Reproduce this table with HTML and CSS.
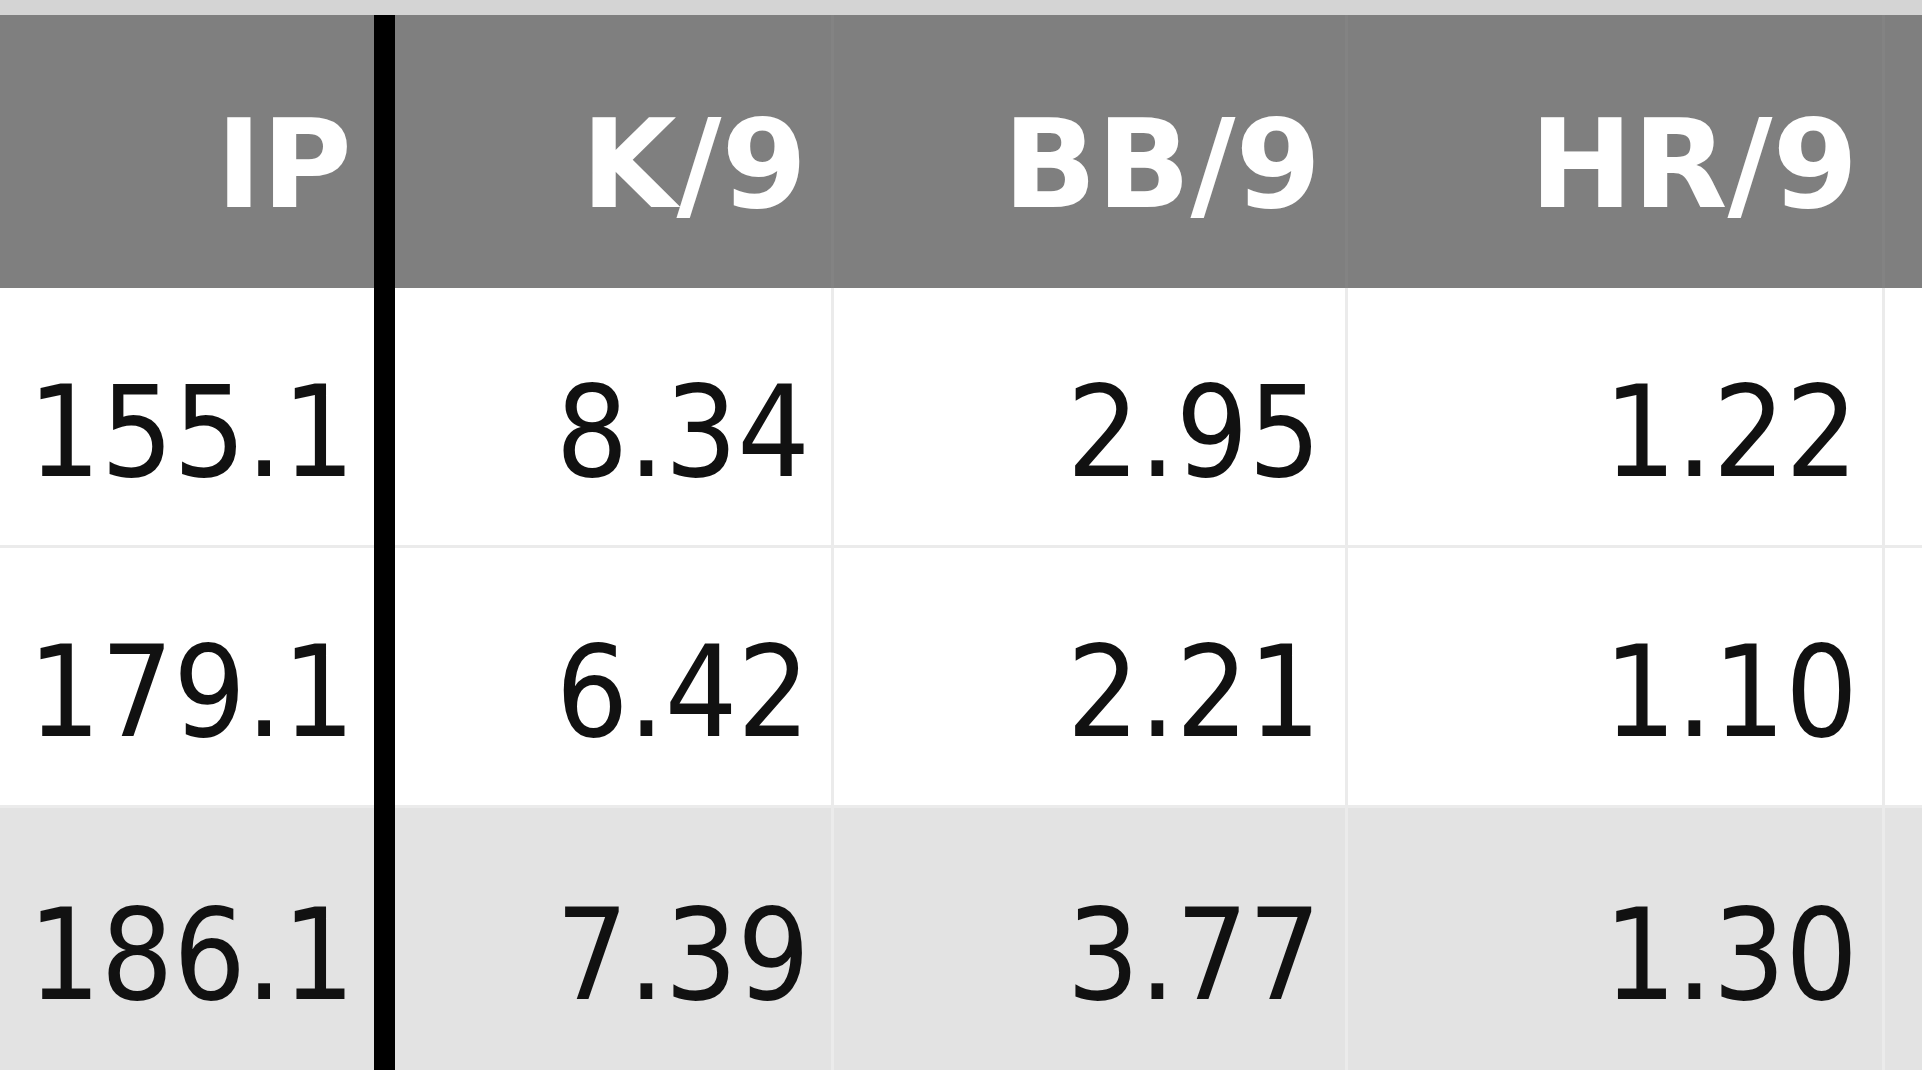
FILE: index.html
```html
<!DOCTYPE html>
<html>
<head>
<meta charset="utf-8">
<link rel="stylesheet" href="styles.css">
</head>
<body>
<div class="topstrip"></div>
<div class="stats">
  <div class="divider"></div>
  <div class="row head">
    <div class="cell ip">IP</div>
    <div class="cell">K/9</div>
    <div class="cell">BB/9</div>
    <div class="cell">HR/9</div>
    <div class="cell last"></div>
  </div>
  <div class="row data">
    <div class="cell ip">155.1</div>
    <div class="cell">8.34</div>
    <div class="cell">2.95</div>
    <div class="cell">1.22</div>
    <div class="cell last"></div>
  </div>
  <div class="row data">
    <div class="cell ip">179.1</div>
    <div class="cell">6.42</div>
    <div class="cell">2.21</div>
    <div class="cell">1.10</div>
    <div class="cell last"></div>
  </div>
  <div class="row data alt">
    <div class="cell ip">186.1</div>
    <div class="cell">7.39</div>
    <div class="cell">3.77</div>
    <div class="cell">1.30</div>
    <div class="cell last"></div>
  </div>
</div>
</body>
</html>
```
FILE: styles.css
```css
html, body {
  margin: 0;
  padding: 0;
  background: #ffffff;
  overflow: hidden;
}
.topstrip {
  height: 15px;
  background: #d4d4d4;
}
.stats {
  position: relative;
}
.divider {
  position: absolute;
  left: 374px;
  top: 0;
  width: 21px;
  height: 1057px;
  background: #000000;
}
.row {
  display: grid;
  grid-template-columns: 395px 439px 514px 537px 1fr;
}
.cell {
  box-sizing: border-box;
  text-align: right;
  padding-right: 24px;
  border-right: 3px solid #ebebeb;
  white-space: nowrap;
}
.cell.ip {
  padding-right: 19px;
  border-right: 21px solid #000000;
}
.cell.last {
  border-right: none;
}
.head {
  height: 273px;
  background: #7f7f7f;
  color: #ffffff;
  font-family: "DejaVu Sans", Verdana, sans-serif;
  font-weight: bold;
  font-size: 123px;
}
.head .cell {
  padding-top: 50px;
  line-height: 200px;
  border-right-color: #838383;
}
.head .cell.ip {
  padding-right: 22px;
  border-right-color: #000000;
}
.data {
  height: 260px;
  background: #ffffff;
  color: #111111;
  font-family: "DejaVu Sans Condensed", "DejaVu Sans", Tahoma, sans-serif;
  font-stretch: condensed;
  font-size: 127px;
}
.data .cell {
  padding-top: 44px;
  line-height: 200px;
  border-bottom: 3px solid #ebebeb;
}
.data .cell:nth-child(2) {
  padding-right: 21px;
}
.data.alt {
  height: 262px;
  background: #e3e3e3;
}
.data.alt .cell {
  padding-top: 47px;
  border-bottom: none;
}
```
